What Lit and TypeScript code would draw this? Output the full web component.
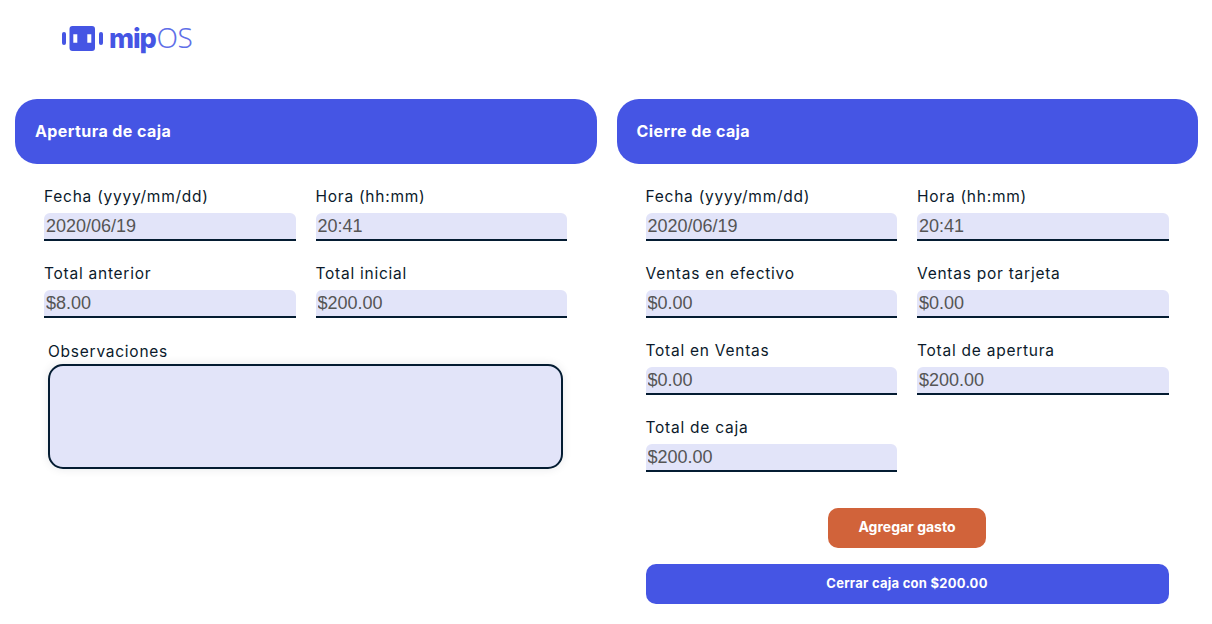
import { LitElement, html, css } from "lit";
import { customElement } from "lit/decorators.js";

@customElement("app-root")
export class AppRoot extends LitElement {
  static styles = css`
    :host { display: block; width: 1212px; height: 624px; background: #fff; font-family: "Inter", "Liberation Sans", sans-serif; color: #0b1a2b; overflow: hidden; }
    .top { height: 99px; box-sizing: border-box; padding: 21px 0 0 62px; display: flex; align-items: flex-start; gap: 6px; }
    .logo-text { font-size: 27px; line-height: 32px; color: #4555e4; font-weight: 800; letter-spacing: -1.1px; }
    .logo-text span { font-family: "Noto Sans", sans-serif; font-size: 28px; font-weight: 300; color: #5f6fe8; letter-spacing: -0.7px; margin-left: 1px; }
    .cols { display: grid; grid-template-columns: 581.5px 581.5px; gap: 20px; padding-left: 15px; }
    .head { height: 63px; padding-bottom: 2px; background: #4555e4; border-radius: 22px; color: #fff; font-weight: 700; font-size: 16px; display: flex; align-items: center; padding-left: 20px; letter-spacing: 0.42px; }
    .grid { display: grid; grid-template-columns: 251.5px 251.5px; column-gap: 20px; row-gap: 21px; padding: 21px 0 0 29px; }
    label { display: block; font-size: 15.5px; line-height: 24px; height: 28px; letter-spacing: 0.75px; white-space: nowrap; }
    input { display: block; box-sizing: border-box; width: 100%; height: 28px; border: 0; border-bottom: 2px solid #041c32; border-radius: 6px 6px 0 0; background: #e2e4f9; font: 18px "Liberation Sans", Arial, sans-serif; color: #555; padding: 0 2px; margin: 0; outline: 0; opacity: 1; -webkit-text-fill-color: #555; }
    .obs { padding: 23px 0 0 33px; }
    .obs label { height: 23px; line-height: 22px; }
    .area { box-sizing: border-box; width: 515px; height: 105px; background: #e2e4f9; border: 2px solid #041c32; border-radius: 15px; box-shadow: 0 0 10px rgba(4, 28, 50, 0.1); }
    .actions { display: flex; flex-direction: column; align-items: center; gap: 16px; padding: 36px 0 0 29px; width: 552px; box-sizing: border-box; }
    button { border: 0; color: #fff; font: 700 13px "Inter", sans-serif; height: 40px; border-radius: 10px; padding: 0 0 2px; }
    .orange { background: #d1633a; width: 158px; font-size: 14px; padding-bottom: 3px; }
    .blue { background: #4555e4; width: 523px; letter-spacing: 0.26px; }
  `;

  field(l: string, v: string) {
    return html`<div><label>${l}</label><input disabled .value=${v} /></div>`;
  }

  render() {
    return html`
      <div class="top">
        <svg width="41" height="26" viewBox="0 0 41 26" style="margin-top:5px">
          <rect x="0" y="6" width="4" height="13" rx="2" fill="#4555e4" />
          <path fill-rule="evenodd" fill="#4555e4" d="M10.500 0h19.500a3 3 0 0 1 3 3v19a3 3 0 0 1-3 3H10.500a3 3 0 0 1-3-3V3a3 3 0 0 1 3-3zM11.300 8.300v8.400h4V8.300zM25.300 8.300v8.400h4V8.300z" />
          <rect x="37" y="6" width="4" height="13" rx="2" fill="#4555e4" />
        </svg>
        <div class="logo-text">mip<span>OS</span></div>
      </div>
      <div class="cols">
        <section>
          <div class="head">Apertura de caja</div>
          <div class="grid">
            ${this.field("Fecha (yyyy/mm/dd)", "2020/06/19")}
            ${this.field("Hora (hh:mm)", "20:41")}
            ${this.field("Total anterior", "$8.00")}
            ${this.field("Total inicial", "$200.00")}
          </div>
          <div class="obs"><label>Observaciones</label><div class="area"></div></div>
        </section>
        <section>
          <div class="head">Cierre de caja</div>
          <div class="grid">
            ${this.field("Fecha (yyyy/mm/dd)", "2020/06/19")}
            ${this.field("Hora (hh:mm)", "20:41")}
            ${this.field("Ventas en efectivo", "$0.00")}
            ${this.field("Ventas por tarjeta", "$0.00")}
            ${this.field("Total en Ventas", "$0.00")}
            ${this.field("Total de apertura", "$200.00")}
            ${this.field("Total de caja", "$200.00")}
          </div>
          <div class="actions">
            <button class="orange">Agregar gasto</button>
            <button class="blue">Cerrar caja con $200.00</button>
          </div>
        </section>
      </div>
    `;
  }
}
